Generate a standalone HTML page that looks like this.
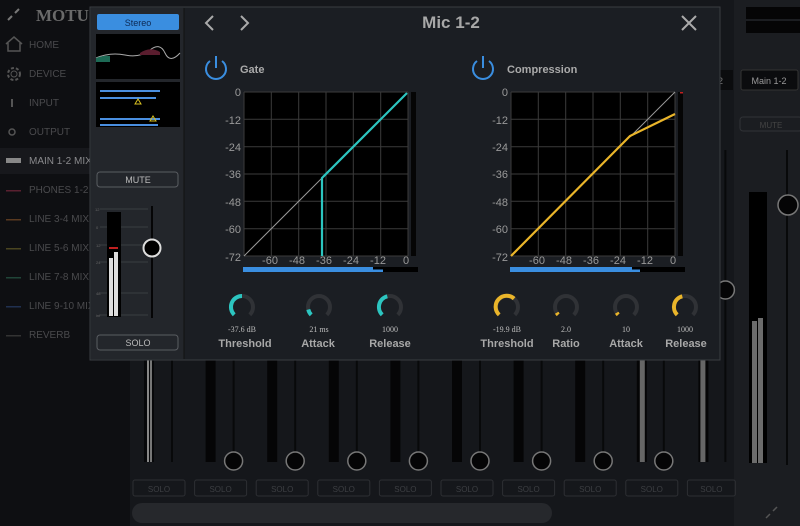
<!DOCTYPE html>
<html><head><meta charset="utf-8"><style>
html,body{margin:0;padding:0;background:#141619;width:800px;height:526px;overflow:hidden}
svg{display:block;font-family:"Liberation Sans",sans-serif}
</style></head><body>
<svg width="800" height="526" viewBox="0 0 800 526" xmlns="http://www.w3.org/2000/svg">
<rect width="800" height="526" fill="#15171b"/>
<!-- sidebar -->
<rect x="0" y="0" width="130" height="526" fill="#0e0f12"/>
<rect x="0" y="148" width="130" height="26" fill="#17181c"/>
<path d="M8 20 L12 16 M15 13 L19 9" stroke="#777" stroke-width="2"/>
<text x="36" y="21" font-family="Liberation Serif,serif" font-weight="bold" font-size="17" fill="#6a6a6a">MOTU</text>
<path d="M6 44 L14 37 L22 44 M8 43 V51 H20 V43" stroke="#555" fill="none" stroke-width="1.5"/>
<circle cx="14" cy="74" r="6" stroke="#555" fill="none" stroke-width="2" stroke-dasharray="3 2"/><circle cx="14" cy="74" r="3" stroke="#555" fill="none"/>
<rect x="11" y="99" width="2" height="8" fill="#555"/>
<circle cx="12" cy="132" r="3" stroke="#555" fill="none" stroke-width="1.5"/>
<g font-size="10" fill="#4a4a4d">
<text x="29" y="48">HOME</text><text x="29" y="77">DEVICE</text><text x="29" y="106">INPUT</text><text x="29" y="135">OUTPUT</text>
<text x="29" y="164" fill="#8a8a8d">MAIN 1-2 MIX</text>
<text x="29" y="193">PHONES 1-2</text><text x="29" y="222">LINE 3-4 MIX</text><text x="29" y="251">LINE 5-6 MIX</text>
<text x="29" y="280">LINE 7-8 MIX</text><text x="29" y="309">LINE 9-10 MIX</text><text x="29" y="338">REVERB</text>
</g>
<rect x="6" y="158" width="15" height="5" fill="#888"/>
<rect x="6" y="190" width="15" height="1.5" fill="#5a2030"/>
<rect x="6" y="219" width="15" height="1.5" fill="#5a3a20"/>
<rect x="6" y="248" width="15" height="1.5" fill="#4a4520"/>
<rect x="6" y="277" width="15" height="1.5" fill="#204538"/>
<rect x="6" y="306" width="15" height="1.5" fill="#203050"/>
<rect x="6" y="335" width="15" height="1.5" fill="#333"/>
<!-- right column -->
<rect x="734" y="0" width="66" height="526" fill="#1b1d21"/>
<rect x="746" y="7" width="54" height="12" fill="#050506"/><rect x="746" y="21" width="54" height="12" fill="#050506"/>
<rect x="741" y="70" width="57" height="20" rx="2" fill="#0b0c0e" stroke="#333"/>
<text x="769" y="84" font-size="9" fill="#999" text-anchor="middle">Main 1-2</text>
<rect x="740" y="117" width="62" height="14" rx="3" fill="none" stroke="#303236"/>
<text x="771" y="128" font-size="8" fill="#444" text-anchor="middle">MUTE</text>
<rect x="717" y="70" width="16" height="20" fill="#0b0c0e"/><text x="718" y="84" font-size="9" fill="#777">2</text>
<rect x="749" y="192" width="18" height="271" fill="#000"/>
<rect x="752" y="321" width="5" height="142" fill="#6c6c6c"/><rect x="758" y="318" width="5" height="145" fill="#6c6c6c"/>
<rect x="786" y="150" width="2" height="315" fill="#08090a"/>
<circle cx="788" cy="205" r="10" fill="#050506" stroke="#777" stroke-width="1.5"/>
<path d="M766 518 L770 514 M773 511 L777 507" stroke="#555" stroke-width="1.5"/>
<!-- channel strips -->
<g id="strips">
<g transform="translate(130,0)"><rect x="14" y="150" width="10" height="312" fill="#07080a"/><rect x="17" y="330" width="2" height="132" fill="#888"/><rect x="20" y="330" width="2" height="132" fill="#777"/><rect x="41" y="150" width="2" height="312" fill="#08090a"/><rect x="3" y="480" width="52" height="16" rx="2" fill="none" stroke="#2d2f33"/><text x="29" y="492" font-size="8" fill="#3d3f43" text-anchor="middle">SOLO</text></g>
<g transform="translate(191.6,0)"><rect x="14" y="150" width="10" height="312" fill="#050506"/><rect x="41" y="150" width="2" height="312" fill="#08090a"/><circle cx="42" cy="461" r="9" fill="#050506" stroke="#777" stroke-width="1.5"/><rect x="3" y="480" width="52" height="16" rx="2" fill="none" stroke="#2d2f33"/><text x="29" y="492" font-size="8" fill="#3d3f43" text-anchor="middle">SOLO</text></g>
<g transform="translate(253.2,0)"><rect x="14" y="150" width="10" height="312" fill="#050506"/><rect x="41" y="150" width="2" height="312" fill="#08090a"/><circle cx="42" cy="461" r="9" fill="#050506" stroke="#777" stroke-width="1.5"/><rect x="3" y="480" width="52" height="16" rx="2" fill="none" stroke="#2d2f33"/><text x="29" y="492" font-size="8" fill="#3d3f43" text-anchor="middle">SOLO</text></g>
<g transform="translate(314.8,0)"><rect x="14" y="150" width="10" height="312" fill="#050506"/><rect x="41" y="150" width="2" height="312" fill="#08090a"/><circle cx="42" cy="461" r="9" fill="#050506" stroke="#777" stroke-width="1.5"/><rect x="3" y="480" width="52" height="16" rx="2" fill="none" stroke="#2d2f33"/><text x="29" y="492" font-size="8" fill="#3d3f43" text-anchor="middle">SOLO</text></g>
<g transform="translate(376.4,0)"><rect x="14" y="150" width="10" height="312" fill="#050506"/><rect x="41" y="150" width="2" height="312" fill="#08090a"/><circle cx="42" cy="461" r="9" fill="#050506" stroke="#777" stroke-width="1.5"/><rect x="3" y="480" width="52" height="16" rx="2" fill="none" stroke="#2d2f33"/><text x="29" y="492" font-size="8" fill="#3d3f43" text-anchor="middle">SOLO</text></g>
<g transform="translate(438,0)"><rect x="14" y="150" width="10" height="312" fill="#050506"/><rect x="41" y="150" width="2" height="312" fill="#08090a"/><circle cx="42" cy="461" r="9" fill="#050506" stroke="#777" stroke-width="1.5"/><rect x="3" y="480" width="52" height="16" rx="2" fill="none" stroke="#2d2f33"/><text x="29" y="492" font-size="8" fill="#3d3f43" text-anchor="middle">SOLO</text></g>
<g transform="translate(499.6,0)"><rect x="14" y="150" width="10" height="312" fill="#050506"/><rect x="41" y="150" width="2" height="312" fill="#08090a"/><circle cx="42" cy="461" r="9" fill="#050506" stroke="#777" stroke-width="1.5"/><rect x="3" y="480" width="52" height="16" rx="2" fill="none" stroke="#2d2f33"/><text x="29" y="492" font-size="8" fill="#3d3f43" text-anchor="middle">SOLO</text></g>
<g transform="translate(561.2,0)"><rect x="14" y="150" width="10" height="312" fill="#050506"/><rect x="41" y="150" width="2" height="312" fill="#08090a"/><circle cx="42" cy="461" r="9" fill="#050506" stroke="#777" stroke-width="1.5"/><rect x="3" y="480" width="52" height="16" rx="2" fill="none" stroke="#2d2f33"/><text x="29" y="492" font-size="8" fill="#3d3f43" text-anchor="middle">SOLO</text></g>
<g transform="translate(622.8,0)"><rect x="14" y="150" width="10" height="312" fill="#050506"/><rect x="17" y="360" width="5" height="102" fill="#666"/><rect x="40" y="150" width="2" height="312" fill="#08090a"/><circle cx="41" cy="461" r="9" fill="#050506" stroke="#777" stroke-width="1.5"/><rect x="3" y="480" width="52" height="16" rx="2" fill="none" stroke="#2d2f33"/><text x="29" y="492" font-size="8" fill="#3d3f43" text-anchor="middle">SOLO</text></g>
<g transform="translate(684.4,0)"><rect x="14" y="150" width="10" height="312" fill="#050506"/><rect x="16" y="360" width="5" height="102" fill="#666"/><rect x="40" y="150" width="2" height="312" fill="#08090a"/><circle cx="41" cy="290" r="9" fill="#050506" stroke="#777" stroke-width="1.5"/><rect x="3" y="480" width="48" height="16" rx="2" fill="none" stroke="#2d2f33"/><text x="27" y="492" font-size="8" fill="#3d3f43" text-anchor="middle">SOLO</text></g>
</g>
<rect x="132" y="503" width="420" height="20" rx="10" fill="#26282c"/>
<!-- modal -->
<rect x="90" y="7" width="630" height="353" fill="#1b1e23" stroke="#3a3d42"/>
<rect x="91" y="8" width="93" height="351" fill="#23262b"/>
<line x1="184" y1="8" x2="184" y2="359" stroke="#111" />
<rect x="97" y="14" width="82" height="16" rx="2" fill="#3a8ee0"/>
<text x="138" y="26" font-size="9" fill="#0d2a55" text-anchor="middle">Stereo</text>
<rect x="96" y="34" width="84" height="45" fill="#000"/>
<path d="M96 58 Q110 52 125 55 T150 50 T165 53 T180 53" stroke="#aaa" fill="none" stroke-width="1"/>
<path d="M96 58 Q104 55 110 56 L110 62 L96 62 Z" fill="#1d6a55"/>
<path d="M140 53 Q150 46 160 52 L160 55 L140 55 Z" fill="#5a1d2e"/>
<rect x="96" y="82" width="84" height="45" fill="#000"/>
<rect x="100" y="90" width="60" height="2" fill="#4a8fe0"/><rect x="100" y="118" width="60" height="2" fill="#4a8fe0"/>
<rect x="100" y="97" width="56" height="2" fill="#4a8fe0"/><rect x="100" y="124" width="58" height="2" fill="#4a8fe0"/>
<path d="M135 104 L138 99 L141 104 Z M150 121 L153 116 L156 121 Z" fill="none" stroke="#d8c020" stroke-width="1"/>
<rect x="97" y="172" width="81" height="15" rx="3" fill="none" stroke="#5a5d62"/>
<text x="138" y="183" font-size="9" fill="#bbb" text-anchor="middle">MUTE</text>
<g stroke="#3a3d42" stroke-width="1">
<line x1="100" y1="209" x2="148" y2="209"/><line x1="100" y1="227" x2="148" y2="227"/><line x1="100" y1="245" x2="148" y2="245"/><line x1="100" y1="262" x2="148" y2="262"/><line x1="100" y1="293" x2="148" y2="293"/><line x1="100" y1="315" x2="148" y2="315"/>
</g>
<g font-size="4" fill="#666"><text x="95" y="211">12</text><text x="96" y="229">0</text><text x="96" y="247">12</text><text x="96" y="264">24</text><text x="96" y="295">48</text><text x="96" y="317">inf</text></g>
<rect x="107" y="212" width="14" height="105" fill="#000"/>
<rect x="109" y="258" width="4" height="58" fill="#ddd"/><rect x="114" y="252" width="4" height="64" fill="#ddd"/>
<rect x="109" y="247" width="9" height="2" fill="#c02020"/>
<rect x="151" y="206" width="2" height="112" fill="#050506"/>
<circle cx="152" cy="248" r="8.5" fill="#000" stroke="#ddd" stroke-width="2"/>
<rect x="97" y="335" width="81" height="15" rx="3" fill="none" stroke="#5a5d62"/>
<text x="138" y="346" font-size="9" fill="#bbb" text-anchor="middle">SOLO</text>
<!-- header -->
<path d="M213 16 L206 23 L213 30" stroke="#aaa" stroke-width="2" fill="none"/>
<path d="M241 16 L248 23 L241 30" stroke="#aaa" stroke-width="2" fill="none"/>
<text x="451" y="28" font-size="17" font-weight="bold" fill="#a8a8a8" text-anchor="middle">Mic 1-2</text>
<path d="M682 16 L696 30 M696 16 L682 30" stroke="#aaa" stroke-width="2"/>
<!-- power icons -->
<path d="M210 61 A10 10 0 1 0 222 61" stroke="#3a8ee0" stroke-width="2" fill="none"/><line x1="216" y1="56" x2="216" y2="68" stroke="#3a8ee0" stroke-width="2"/>
<path d="M477 61 A10 10 0 1 0 489 61" stroke="#3a8ee0" stroke-width="2" fill="none"/><line x1="483" y1="56" x2="483" y2="68" stroke="#3a8ee0" stroke-width="2"/>
<text x="240" y="73" font-size="11" font-weight="bold" fill="#aaa">Gate</text>
<text x="507" y="73" font-size="11" font-weight="bold" fill="#aaa">Compression</text>
<!-- gate graph -->
<rect x="244" y="92" width="164" height="164" fill="#000"/>
<g stroke="#3b3b3b" stroke-width="1">
<line x1="271.3" y1="92" x2="271.3" y2="256"/><line x1="298.7" y1="92" x2="298.7" y2="256"/><line x1="326" y1="92" x2="326" y2="256"/><line x1="353.3" y1="92" x2="353.3" y2="256"/><line x1="380.7" y1="92" x2="380.7" y2="256"/>
<line x1="244" y1="119.3" x2="408" y2="119.3"/><line x1="244" y1="146.7" x2="408" y2="146.7"/><line x1="244" y1="174" x2="408" y2="174"/><line x1="244" y1="201.3" x2="408" y2="201.3"/><line x1="244" y1="228.7" x2="408" y2="228.7"/>
<line x1="244" y1="92" x2="408" y2="92"/><line x1="244" y1="256" x2="408" y2="256"/><line x1="244" y1="92" x2="244" y2="256"/><line x1="408" y1="92" x2="408" y2="256"/>
</g>
<line x1="244" y1="256" x2="322" y2="178" stroke="#999" stroke-width="1"/>
<path d="M322 256 L322 178 L407 93" stroke="#2cc5c0" stroke-width="2.2" fill="none"/>
<rect x="411" y="92" width="5" height="164" fill="#050505"/>
<rect x="243" y="267" width="175" height="5" fill="#000"/>
<rect x="243" y="267" width="130" height="2.5" fill="#3a8ee0"/><rect x="243" y="269.5" width="140" height="2.5" fill="#3a8ee0"/>
<g font-size="11" fill="#999" text-anchor="end">
<text x="241" y="96">0</text><text x="241" y="124">-12</text><text x="241" y="151">-24</text><text x="241" y="178">-36</text><text x="241" y="206">-48</text><text x="241" y="233">-60</text><text x="241" y="261">-72</text>
</g>
<g font-size="11" fill="#999" text-anchor="middle">
<text x="270" y="264">-60</text><text x="297" y="264">-48</text><text x="324" y="264">-36</text><text x="351" y="264">-24</text><text x="378" y="264">-12</text><text x="406" y="264">0</text>
</g>
<!-- comp graph -->
<rect x="511" y="92" width="164" height="164" fill="#000"/>
<g stroke="#3b3b3b" stroke-width="1">
<line x1="538.3" y1="92" x2="538.3" y2="256"/><line x1="565.7" y1="92" x2="565.7" y2="256"/><line x1="593" y1="92" x2="593" y2="256"/><line x1="620.3" y1="92" x2="620.3" y2="256"/><line x1="647.7" y1="92" x2="647.7" y2="256"/>
<line x1="511" y1="119.3" x2="675" y2="119.3"/><line x1="511" y1="146.7" x2="675" y2="146.7"/><line x1="511" y1="174" x2="675" y2="174"/><line x1="511" y1="201.3" x2="675" y2="201.3"/><line x1="511" y1="228.7" x2="675" y2="228.7"/>
<line x1="511" y1="92" x2="675" y2="92"/><line x1="511" y1="256" x2="675" y2="256"/><line x1="511" y1="92" x2="511" y2="256"/><line x1="675" y1="92" x2="675" y2="256"/>
</g>
<line x1="630" y1="137" x2="675" y2="92" stroke="#999" stroke-width="1"/>
<path d="M511 256 L630 136 L675 114" stroke="#eab52a" stroke-width="2.2" fill="none"/>
<rect x="678" y="92" width="5" height="164" fill="#050505"/><rect x="680" y="92" width="3" height="1.5" fill="#c02020"/>
<rect x="510" y="267" width="175" height="5" fill="#000"/>
<rect x="510" y="267" width="122" height="2.5" fill="#3a8ee0"/><rect x="510" y="269.5" width="130" height="2.5" fill="#3a8ee0"/>
<g font-size="11" fill="#999" text-anchor="end">
<text x="508" y="96">0</text><text x="508" y="124">-12</text><text x="508" y="151">-24</text><text x="508" y="178">-36</text><text x="508" y="206">-48</text><text x="508" y="233">-60</text><text x="508" y="261">-72</text>
</g>
<g font-size="11" fill="#999" text-anchor="middle">
<text x="537" y="264">-60</text><text x="564" y="264">-48</text><text x="591" y="264">-36</text><text x="618" y="264">-24</text><text x="645" y="264">-12</text><text x="673" y="264">0</text>
</g>
<!-- knobs -->
<g fill="none" stroke-width="4">
<g stroke="#303236">
<path d="M234.2 314.8 A11 11 0 1 1 249.8 314.8"/><path d="M311.2 314.8 A11 11 0 1 1 326.8 314.8"/><path d="M382.2 314.8 A11 11 0 1 1 397.8 314.8"/>
<path d="M499.2 314.8 A11 11 0 1 1 514.8 314.8"/><path d="M558.2 314.8 A11 11 0 1 1 573.8 314.8"/><path d="M618.2 314.8 A11 11 0 1 1 633.8 314.8"/><path d="M677.2 314.8 A11 11 0 1 1 692.8 314.8"/>
</g>
<g stroke="#2cc5c0">
<path d="M234.2 314.8 A11 11 0 0 1 242 296"/>
<path d="M311.2 314.8 A11 11 0 0 1 308.3 309.5"/>
<path d="M382.2 314.8 A11 11 0 0 1 387.3 296.3"/>
</g>
<g stroke="#eab52a">
<path d="M499.2 314.8 A11 11 0 1 1 514.1 298.6"/>
<path d="M558.2 314.8 A11 11 0 0 1 556.7 312.8"/>
<path d="M618.2 314.8 A11 11 0 0 1 616.7 312.8"/>
<path d="M677.2 314.8 A11 11 0 0 1 682.3 296.3"/>
</g>
</g>
<g font-family="Liberation Serif,serif" font-size="8" fill="#bbb" text-anchor="middle">
<text x="242" y="332">-37.6 dB</text><text x="319" y="332">21 ms</text><text x="390" y="332">1000</text>
<text x="507" y="332">-19.9 dB</text><text x="566" y="332">2.0</text><text x="626" y="332">10</text><text x="685" y="332">1000</text>
</g>
<g font-size="11" font-weight="bold" fill="#a8a8a8" text-anchor="middle">
<text x="245" y="347">Threshold</text><text x="318" y="347">Attack</text><text x="390" y="347">Release</text>
<text x="507" y="347">Threshold</text><text x="566" y="347">Ratio</text><text x="626" y="347">Attack</text><text x="686" y="347">Release</text>
</g>
</svg>
</body></html>
